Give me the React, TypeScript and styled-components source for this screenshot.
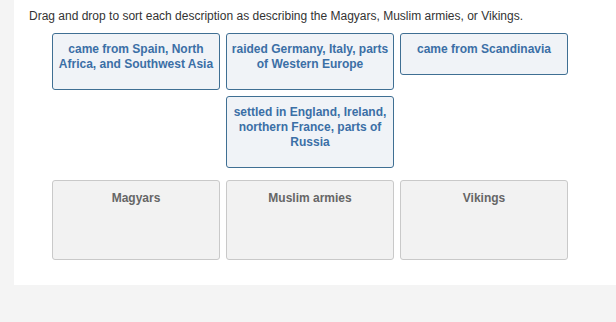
import React from "react";
import styled, { createGlobalStyle } from "styled-components";

const Global = createGlobalStyle`
  html, body { margin: 0; padding: 0; background: #f4f4f4; }
  body { font-family: "Liberation Sans", Arial, sans-serif; }
`;

const Page = styled.div`
  display: flex;
  flex-direction: column;
  width: 616px;
  height: 322px;
  background: #f4f4f4;
`;

const Main = styled.div`
  margin-left: 14px;
  height: 285px;
  background: #ffffff;
  padding: 9px 0 0 15px;
  box-sizing: border-box;
`;

const Prompt = styled.div`
  font-size: 12px;
  line-height: 15px;
  color: #333333;
`;

const Pool = styled.div`
  margin: 9px 0 0 23px;
  width: 516px;
  display: flex;
  flex-wrap: wrap;
  justify-content: center;
  align-items: flex-start;
  gap: 6px;
`;

const Card = styled.div`
  width: 168px;
  box-sizing: border-box;
  border: 1px solid #3f6f93;
  border-radius: 3px;
  background: #f0f3f7;
  padding: 8px 4px 17px;
  text-align: center;
  font-weight: bold;
  font-size: 12px;
  line-height: 15px;
  color: #3b6fa6;
`;

const Targets = styled.div`
  margin: 12px 0 0 23px;
  display: flex;
  gap: 6px;
`;

const Target = styled.div`
  width: 168px;
  height: 80px;
  box-sizing: border-box;
  border: 1px solid #c9c9c9;
  border-radius: 3px;
  background: #f2f2f2;
  padding-top: 10px;
  text-align: center;
  font-weight: bold;
  font-size: 12px;
  line-height: 15px;
  color: #666666;
`;

const cards = [
  "came from Spain, North Africa, and Southwest Asia",
  "raided Germany, Italy, parts of Western Europe",
  "came from Scandinavia",
  "settled in England, Ireland, northern France, parts of Russia",
];

const targets = ["Magyars", "Muslim armies", "Vikings"];

export default function App() {
  return (
    <Page>
      <Global />
      <Main>
        <Prompt>
          Drag and drop to sort each description as describing the Magyars, Muslim armies, or Vikings.
        </Prompt>
        <Pool>
          {cards.map((c) => (
            <Card key={c}>{c}</Card>
          ))}
        </Pool>
        <Targets>
          {targets.map((t) => (
            <Target key={t}>{t}</Target>
          ))}
        </Targets>
      </Main>
    </Page>
  );
}
